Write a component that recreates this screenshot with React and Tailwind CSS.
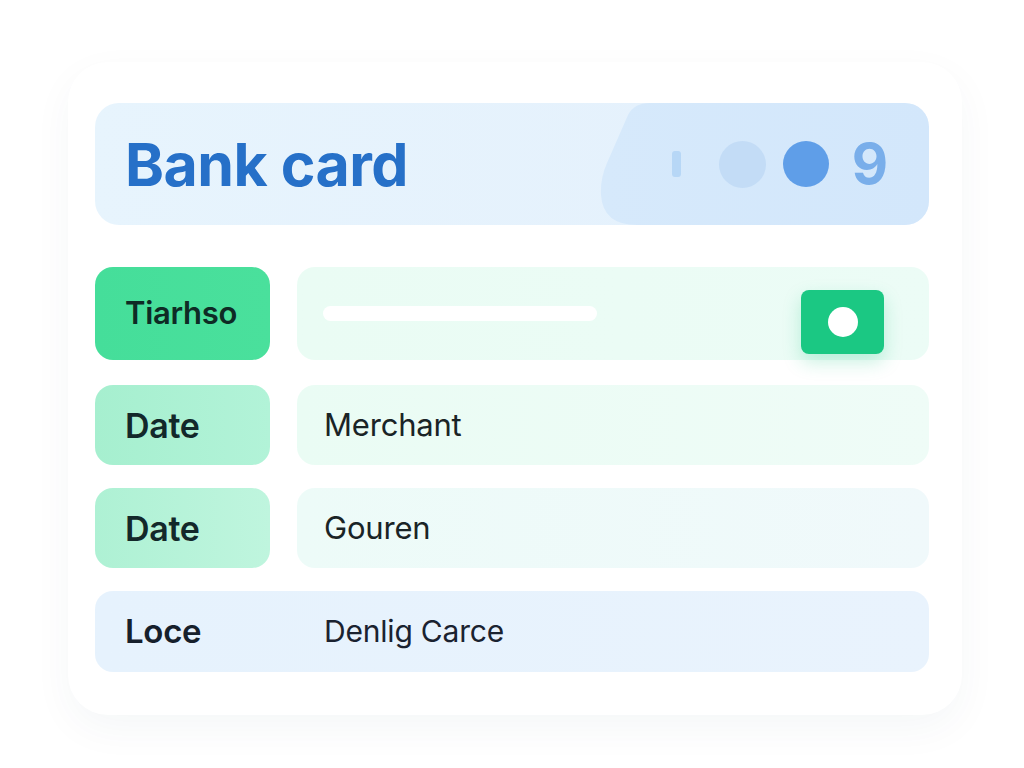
import React from "react";

const rows = [
    { label: "Date", value: "Merchant", labelBg: "bg-gradient-to-r from-[#a6efcf] to-[#b2f3d8]", fieldBg: "bg-gradient-to-r from-[#eafcf4] to-[#effcf7]" },
    { label: "Date", value: "Gouren", labelBg: "bg-gradient-to-r from-[#aef1d4] to-[#bff5de]", fieldBg: "bg-gradient-to-r from-[#edfbf8] to-[#f0f9fb]" },
];

const App = () => {
    return (
        <div className="min-h-screen w-full bg-white pt-[62px] font-['Inter',sans-serif]">
            <div className="ml-[68px] w-[894px] rounded-[40px] bg-white pl-[27px] pr-[33px] pt-[41px] pb-[43px] shadow-[0_14px_40px_rgba(30,60,90,0.045)]">
                {/* Header */}
                <header className="relative flex h-[122px] items-center justify-between overflow-hidden rounded-[24px] bg-gradient-to-r from-[#e7f4fd] to-[#e4f0fc] pl-[30px] pr-[41px]">
                    <svg className="absolute inset-0" width="834" height="122" viewBox="0 0 834 122">
                        <defs>
                            <linearGradient id="pill" x1="0" x2="1" y1="0" y2="0">
                                <stop offset="0" stopColor="#d6e9fb" />
                                <stop offset="1" stopColor="#d3e7fb" />
                            </linearGradient>
                        </defs>
                        <path d="M555 0 H810 Q834 0 834 24 V98 Q834 122 810 122 H542 Q508 122 506 92 Q505 76 512 60 L533 12 Q539 0 555 0 Z" fill="url(#pill)" />
                    </svg>
                    <h1 className="relative text-[59px] font-bold leading-none tracking-[-0.5px] text-[#2670c8]">Bank card</h1>
                    <div className="relative flex items-center">
                        <span className="h-[26px] w-[9px] rounded-[3px] bg-[#b7d7f6]"></span>
                        <span className="ml-[38px] h-[47px] w-[47px] rounded-full bg-[#c3dcf6]"></span>
                        <span className="ml-[17px] h-[46px] w-[46px] rounded-full bg-[#5f9ee8]"></span>
                        <span className="ml-[23px] text-[56px] font-bold leading-none text-[#79aeea]">9</span>
                    </div>
                </header>

                {/* Rows */}
                <div className="mt-[42px] flex flex-col gap-[23px]">
                    <div className="mb-[2px] flex h-[93px] gap-[27px]">
                        <div className="flex w-[175px] items-center rounded-[18px] bg-gradient-to-r from-[#45de9a] to-[#4ae09c] pl-[30px]">
                            <span className="text-[31px] font-semibold tracking-[-0.3px] text-[#0e2b25]">Tiarhso</span>
                        </div>
                        <div className="relative flex flex-1 items-center rounded-[18px] bg-gradient-to-r from-[#eafcf4] to-[#ecfcf6] pl-[26px] pr-[45px]">
                            <span className="h-[15px] w-[274px] rounded-full bg-white"></span>
                            <span className="ml-auto mt-[16px] flex h-[64px] w-[83px] items-center justify-center rounded-[8px] bg-[#1bc883] shadow-[0_8px_18px_rgba(27,200,131,0.25)]">
                                <span className="h-[30px] w-[30px] rounded-full bg-white"></span>
                            </span>
                        </div>
                    </div>

                    {rows.map((row, i) => (
                        <div key={i} className="flex h-[80px] gap-[27px]">
                            <div className={`flex w-[175px] items-center rounded-[18px] pl-[30px] ${row.labelBg}`}>
                                <span className="text-[34px] font-semibold tracking-[-0.3px] text-[#13282a]">{row.label}</span>
                            </div>
                            <div className={`flex flex-1 items-center rounded-[18px] pl-[27px] ${row.fieldBg}`}>
                                <span className="text-[31px] tracking-[-0.2px] text-[#1a2426]">{row.value}</span>
                            </div>
                        </div>
                    ))}

                    <div className="flex h-[81px] items-center rounded-[18px] bg-gradient-to-r from-[#e6f2fd] to-[#e9f3fd] pl-[30px]">
                        <span className="w-[199px] text-[33px] font-semibold tracking-[-0.3px] text-[#16202c]">Loce</span>
                        <span className="text-[30px] tracking-[-0.2px] text-[#1a2230]">Denlig Carce</span>
                    </div>
                </div>
            </div>
        </div>
    );
};

export default App;
